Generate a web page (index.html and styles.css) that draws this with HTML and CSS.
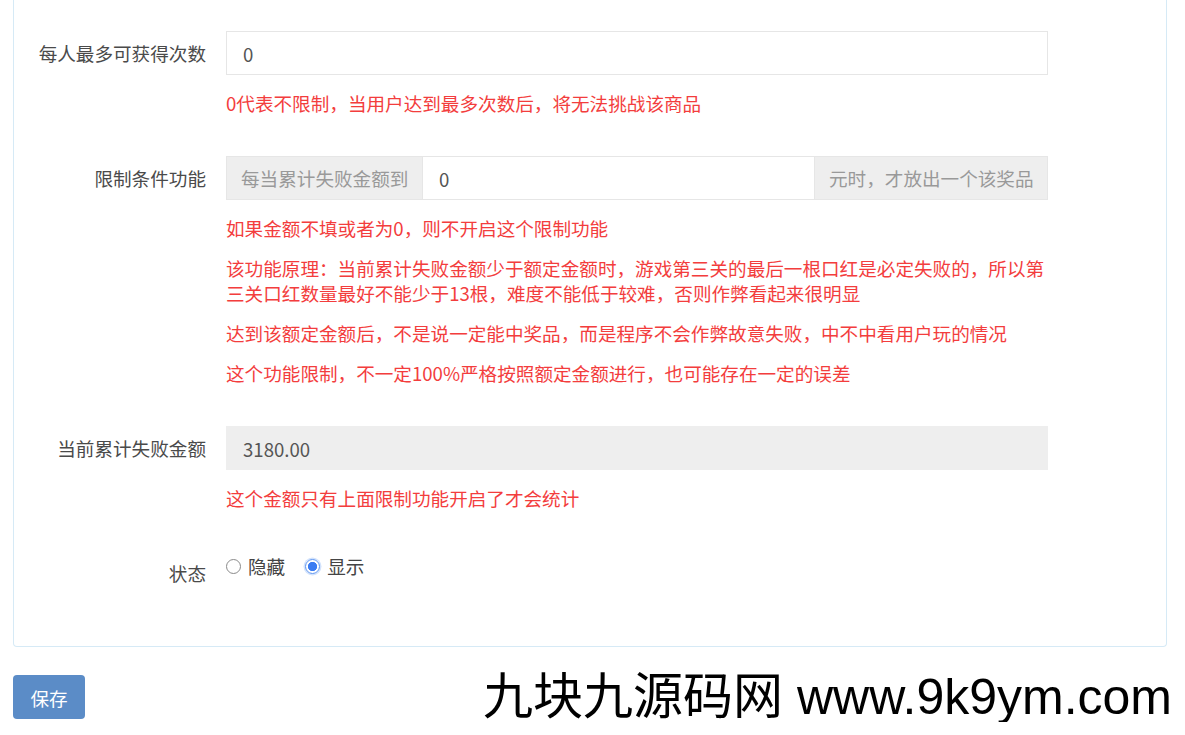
FILE: index.html
```html
<!DOCTYPE html>
<html lang="zh-CN">
<head>
<meta charset="utf-8">
<title>商品设置</title>
<link rel="stylesheet" href="styles.css">
</head>
<body>
<div class="panel">
  <div class="form-group">
    <label class="form-label">每人最多可获得次数</label>
    <div class="form-field">
      <input class="form-control" type="text" value="0">
      <p class="help">0代表不限制，当用户达到最多次数后，将无法挑战该商品</p>
    </div>
  </div>

  <div class="form-group">
    <label class="form-label">限制条件功能</label>
    <div class="form-field">
      <div class="input-group">
        <span class="addon addon-pre">每当累计失败金额到</span>
        <input class="form-control group-control" type="text" value="0">
        <span class="addon addon-post">元时，才放出一个该奖品</span>
      </div>
      <p class="help">如果金额不填或者为0，则不开启这个限制功能</p>
      <p class="help">该功能原理：当前累计失败金额少于额定金额时，游戏第三关的最后一根口红是必定失败的，所以第三关口红数量最好不能少于13根，难度不能低于较难，否则作弊看起来很明显</p>
      <p class="help">达到该额定金额后，不是说一定能中奖品，而是程序不会作弊故意失败，中不中看用户玩的情况</p>
      <p class="help">这个功能限制，不一定100%严格按照额定金额进行，也可能存在一定的误差</p>
    </div>
  </div>

  <div class="form-group">
    <label class="form-label">当前累计失败金额</label>
    <div class="form-field">
      <input class="form-control readonly" type="text" value="3180.00" readonly>
      <p class="help">这个金额只有上面限制功能开启了才会统计</p>
    </div>
  </div>

  <div class="form-group status-group">
    <label class="form-label status-label">状态</label>
    <div class="form-field radio-row">
      <label class="radio"><input type="radio" name="status" value="0"><span>隐藏</span></label>
      <label class="radio"><input type="radio" name="status" value="1" checked><span>显示</span></label>
    </div>
  </div>
</div>

<div class="footer">
  <button class="btn-save" type="button">保存</button>
  <div class="watermark">九块九源码网 www.9k9ym.com</div>
</div>
</body>
</html>
```

FILE: styles.css
```css
* {
  box-sizing: border-box;
}

body {
  margin: 0;
  background: #ffffff;
  font-family: "Noto Sans CJK SC", "Microsoft YaHei", sans-serif;
  font-size: 18.6px;
  color: #444444;
}

.panel {
  margin: 0 18px 0 13px;
  border: 1px solid #d6eaf6;
  border-top: none;
  border-radius: 0 0 4px 4px;
  padding: 31px 0 58px;
}

.form-group {
  display: grid;
  grid-template-columns: 192px 822px;
  column-gap: 20px;
  margin-bottom: 41px;
}

.form-group:last-child {
  margin-bottom: 0;
}

.form-label {
  text-align: right;
  line-height: 44px;
  color: #4a4a4a;
}

.form-control {
  display: block;
  width: 100%;
  height: 44px;
  margin: 0;
  border: 1px solid #e6e6e6;
  padding: 0 16px;
  font: inherit;
  color: #555555;
  background: #ffffff;
  outline: none;
}

.form-control.readonly {
  background: #eeeeee;
  border-color: #eeeeee;
}

.input-group {
  display: flex;
  height: 44px;
}

.addon {
  flex: none;
  background: #eeeeee;
  border: 1px solid #e6e6e6;
  color: #999999;
  line-height: 42px;
  padding: 0 14px;
  white-space: nowrap;
}

.addon-pre {
  width: 196px;
  border-right: none;
}

.addon-post {
  width: 233px;
  border-left: none;
}

.group-control {
  flex: 1;
  width: auto;
  min-width: 0;
}

.help {
  margin: 15px 0 0;
  line-height: 25px;
  color: #f33d3d;
}

.status-label {
  line-height: 30px;
  padding-top: 7px;
}

.radio-row {
  display: flex;
  align-items: center;
  height: 30px;
}

.radio {
  display: inline-flex;
  align-items: center;
  gap: 7px;
  margin-right: 20px;
  line-height: 30px;
  color: #444444;
}

.radio input {
  -webkit-appearance: none;
  appearance: none;
  width: 15px;
  height: 15px;
  margin: 0;
  border: 1.5px solid #8a8a8a;
  border-radius: 50%;
  background: #ffffff;
}

.radio input:checked {
  border: 1px solid #5b93f0;
  background: radial-gradient(circle, #3b7cf2 0 4.3px, #ffffff 5px);
  box-shadow: 0 0 0 1.5px #d3e3fc;
}

.footer {
  display: flex;
  justify-content: space-between;
  align-items: center;
  margin-top: 25px;
  padding: 0 13px;
}

.btn-save {
  width: 72px;
  height: 44px;
  border: none;
  border-radius: 4px;
  background: #5b8cc7;
  color: #ffffff;
  font: inherit;
  padding: 0;
}

.watermark {
  font-family: "Liberation Sans", "Noto Sans CJK SC", sans-serif;
  font-size: 50px;
  line-height: 50px;
  color: #000000;
  white-space: nowrap;
}
```
